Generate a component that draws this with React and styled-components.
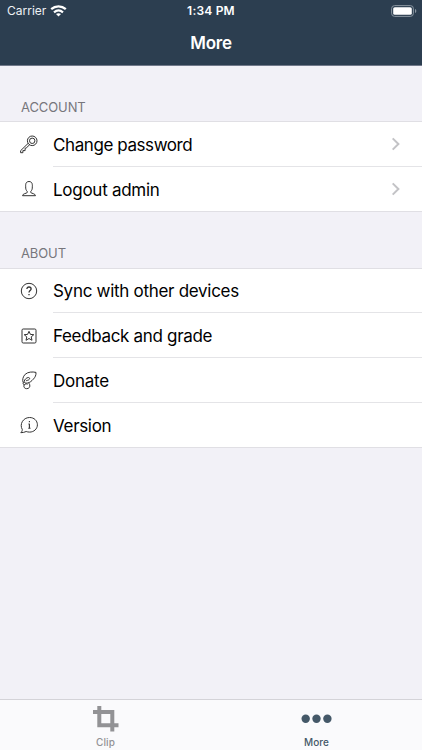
import styled, { createGlobalStyle } from "styled-components"

const GlobalStyle = createGlobalStyle`
  * {
    box-sizing: border-box;
  }
  body {
    margin: 0;
    background: #f2f1f7;
    font-family: Inter, "Liberation Sans", sans-serif;
  }
`

const KeyIcon = () => (
  <RowIcon viewBox="0 0 20 20">
    <circle cx="13.2" cy="6.8" r="4.8" />
    <circle cx="13.2" cy="6.8" r="2.7" />
    <path d="M9.2 9.3 1.6 16.7v2h2.3v-2.1h2.2v-2.3l1-.2 3.6-3.4" />
  </RowIcon>
)

const PersonIcon = () => (
  <RowIcon viewBox="0 0 20 20">
    <path d="M8.2 12.3C6.9 11.2 6.6 9.6 6.7 7.8 6.500 7 6.700 6.500 6.700 5.700c.1-2.100 1.400-3.200 3.300-3.200s3.200 1.100 3.300 3.200c0 .8.200 1.300 0 2.100.1 1.800-.2 3.400-1.500 4.500v1.300c.8.900 4.500.9 4.700 3.100h-13c.2-2.200 3.900-2.200 4.700-3.100z" />
  </RowIcon>
)

const HelpIcon = () => (
  <RowIcon viewBox="0 0 20 20">
    <circle cx="10" cy="10" r="7.7" />
    <path
      d="M7.9 8.1c0-1.400.9-2.100 2.100-2.100 1.300 0 2.100.8 2.100 1.900 0 1.700-2.100 1.700-2.100 3.600M10 12.900v1.300"
      strokeWidth="1.3"
    />
  </RowIcon>
)

const StarIcon = () => (
  <RowIcon viewBox="0 0 20 20">
    <rect x="3" y="3" width="14" height="14" rx="1.2" />
    <path d="m10 5.300 1.400 3.100 3.400.3-2.600 2.200.8 3.400-3-1.800-3 1.800.8-3.400-2.600-2.200 3.400-.3z" />
  </RowIcon>
)

const DonateIcon = () => (
  <RowIcon viewBox="0 0 20 20">
    <path d="M4.300 12.800C3 10.300 3.900 6.500 6.200 4.300 9 1.800 13.400 1.600 17 2.400c.2 2.800-.9 4.900-2.600 6.700-1.800 2-3.600 3.500-5.800 3.900-2 .4-3.600-.1-3.400-1.600.3-1.900 2.200-3.700 4.100-3.900 1.300-.1 1.700.9 1 1.800-.8 1.100-2.300.9-3.400 1.600" />
    <path d="M5.200 12.300c-1.500.3-1.400 2.100 0 2.500-1 1.800.1 3.900 2.500 3.900 2.300 0 3.700-1.900 3-4-.3-.8-.7-1.400-1.200-1.900M5.200 14.800c1-1 2.400-1.200 3.500-.6" />
  </RowIcon>
)

const InfoIcon = () => (
  <RowIcon viewBox="0 0 20 20">
    <path d="M1.800 17.700c1-.8 1.500-2 1.500-3.200-3-4.800.5-12 7.300-12 4.500 0 7.800 3.200 7.800 7.300s-3.500 7.300-7.800 7.300c-1.300 0-2.400-.2-3.400-.6-1.700.8-3.500 1.200-5.400 1.200z" />
    <path d="M10.400 5.900v1.300M9.400 9h1v4.300M9.300 13.300h2.200" strokeWidth="1.100" />
  </RowIcon>
)

const WifiIcon = () => (
  <svg width="17" height="12" viewBox="0 0 17 12" fill="none" stroke="#fff">
    <path d="M1.200 4.200c4.200-3.800 10.400-3.800 14.600 0" strokeWidth="2.300" />
    <path d="M4 7.300c2.700-2.300 6.300-2.300 9 0" strokeWidth="2.200" />
    <path d="M8.500 11.600 6 9.100c1.500-1.200 3.500-1.200 5 0z" fill="#fff" stroke="none" />
  </svg>
)

const BatteryIcon = () => (
  <svg width="26" height="12" viewBox="0 0 26 12">
    <rect x=".6" y=".6" width="21.800" height="10.800" rx="3" fill="none" stroke="#8a96a1" />
    <rect x="2.200" y="2.200" width="18.600" height="7.600" rx="1.600" fill="#fff" />
    <path d="M24 4v4c.8-.4 1.300-1.100 1.300-2S24.800 4.400 24 4z" fill="#8a96a1" />
  </svg>
)

const Chevron = () => (
  <svg width="9" height="14" viewBox="0 0 9 14" fill="none" stroke="#c3c3c6" strokeWidth="2">
    <path d="m1.700 1.400 5.700 5.600-5.700 5.600" />
  </svg>
)

const CropIcon = () => (
  <svg width="26" height="26" viewBox="0 0 26 26" fill="none" stroke="#929295" strokeWidth="4">
    <path d="M6.300 0v19.300H25.500M0 6h19.300v19.500" />
  </svg>
)

const DotsIcon = () => (
  <svg width="32" height="26" viewBox="0 0 32 26" fill="#445868">
    <circle cx="4.700" cy="12.800" r="4.200" />
    <circle cx="15.500" cy="12.800" r="4.200" />
    <circle cx="26.400" cy="12.800" r="4.200" />
  </svg>
)

const sections = [
  {
    title: "ACCOUNT",
    rows: [
      { label: "Change password", icon: KeyIcon, spacing: "-0.42px", link: true },
      { label: "Logout admin", icon: PersonIcon, spacing: "-0.27px", link: true },
    ],
  },
  {
    title: "ABOUT",
    rows: [
      { label: "Sync with other devices", icon: HelpIcon, spacing: "-0.29px" },
      { label: "Feedback and grade", icon: StarIcon, spacing: "-0.33px" },
      { label: "Donate", icon: DonateIcon, spacing: "-0.25px" },
      { label: "Version", icon: InfoIcon, spacing: "-0.32px" },
    ],
  },
]

function App() {
  return (
    <Screen>
      <GlobalStyle />
      <Header>
        <StatusBar>
          <Carrier>
            Carrier
            <WifiIcon />
          </Carrier>
          <Clock>1:34 PM</Clock>
          <Battery>
            <BatteryIcon />
          </Battery>
        </StatusBar>
        <Title>More</Title>
      </Header>
      <Content>
        {sections.map(({ title, rows }) => (
          <section key={title}>
            <SectionTitle>{title}</SectionTitle>
            <List>
              {rows.map(({ label, icon: Icon, spacing, link }) => (
                <Row key={label}>
                  <Icon />
                  <RowBody>
                    <Label $spacing={spacing}>{label}</Label>
                    {link && <Chevron />}
                  </RowBody>
                </Row>
              ))}
            </List>
          </section>
        ))}
      </Content>
      <TabBar>
        <Tab>
          <CropIcon />
          Clip
        </Tab>
        <Tab $active>
          <DotsIcon />
          More
        </Tab>
      </TabBar>
    </Screen>
  )
}

const Screen = styled.div`
  height: 750px;
  display: flex;
  flex-direction: column;
  overflow: hidden;
  background: #f2f1f7;
`
const Header = styled.header`
  height: 66px;
  background: #2c3e50;
  border-bottom: 1px solid #71798a;
  color: #fff;
`
const StatusBar = styled.div`
  height: 21px;
  padding: 0 5px 0 7px;
  display: grid;
  grid-template-columns: 1fr auto 1fr;
  align-items: center;
  font-size: 12px;
`
const Carrier = styled.div`
  display: flex;
  align-items: center;
  gap: 4px;
  color: #eef1f4;
`
const Clock = styled.div`
  margin-right: 2px;
  font-weight: 600;
  letter-spacing: 0.2px;
`
const Battery = styled.div`
  display: flex;
  justify-content: flex-end;
`
const Title = styled.h1`
  margin: 0;
  height: 44px;
  font-size: 17px;
  font-weight: 600;
  line-height: 45px;
  letter-spacing: -0.25px;
  text-align: center;
`
const Content = styled.main`
  flex: 1;
`
const SectionTitle = styled.h2`
  margin: 0;
  height: 56px;
  padding: 33px 21px 0;
  font-size: 13px;
  font-weight: 400;
  line-height: 16px;
  letter-spacing: -0.1px;
  color: #77767c;

  section + section & {
    height: 57px;
  }
`
const List = styled.ul`
  margin: 0;
  padding: 0;
  list-style: none;
  background: #fff;
  box-shadow: 0 -1px #e0dfe4, inset 0 -1px #e0dfe4;
`
const RowBody = styled.div`
  flex: 1;
  height: 100%;
  padding-right: 22px;
  display: flex;
  align-items: center;
  justify-content: space-between;
  border-bottom: 1px solid #e4e4e7;
`
const Row = styled.li`
  height: 44.75px;
  padding-left: 19px;
  display: flex;
  align-items: center;
  gap: 14px;

  &:last-child ${RowBody} {
    border-bottom-color: transparent;
  }
`
const RowIcon = styled.svg`
  width: 20px;
  height: 20px;
  flex: none;
  fill: none;
  stroke: #333;
  stroke-width: 1;
  stroke-linejoin: round;
`
const Label = styled.span`
  padding-top: 2px;
  font-size: 17px;
  line-height: 22px;
  letter-spacing: ${(props) => props.$spacing};
  color: #000;
`
const TabBar = styled.nav`
  height: 51px;
  display: flex;
  background: #fafafc;
  border-top: 1px solid #d4d3d8;
`
const Tab = styled.div`
  flex: 1;
  padding-top: 6px;
  display: flex;
  flex-direction: column;
  align-items: center;
  gap: 4px;
  font-size: 10px;
  font-weight: 500;
  line-height: 13px;
  letter-spacing: 0.1px;
  color: ${(props) => (props.$active ? "#445868" : "#929295")};
`
export default App
